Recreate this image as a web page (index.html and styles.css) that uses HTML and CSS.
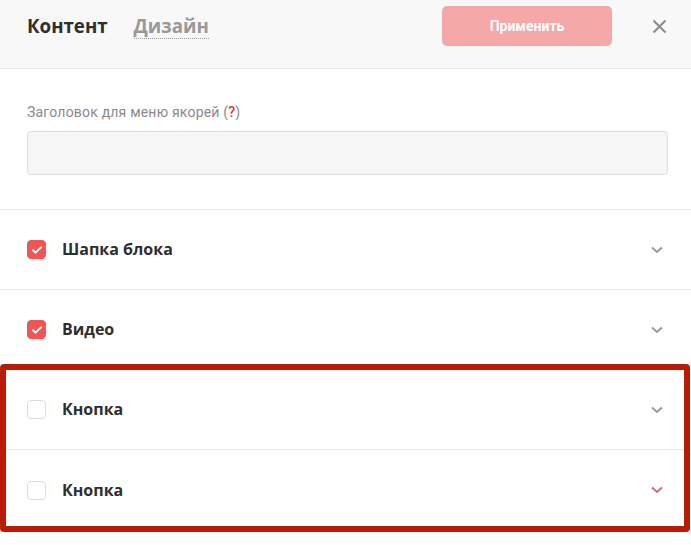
FILE: index.html
```html
<!DOCTYPE html>
<html lang="ru">
<head>
<meta charset="utf-8">
<link rel="stylesheet" href="styles.css">
</head>
<body>
<div class="panel">
  <header class="head">
    <div class="tabs">
      <span class="tab active">Контент</span>
      <span class="tab">Дизайн</span>
    </div>
    <button class="apply">Применить</button>
    <button class="close" aria-label="Закрыть">
      <svg width="15" height="15" viewBox="0 0 15 15"><path d="M1.5 1.5L13.5 13.5M13.5 1.5L1.5 13.5" stroke="#8a8a8a" stroke-width="2" fill="none"/></svg>
    </button>
  </header>
  <section class="field">
    <label class="label">Заголовок для меню якорей (<span class="q">?</span>)</label>
    <div class="input"></div>
  </section>
  <div class="row">
    <span class="cb on"><svg width="12" height="10" viewBox="0 0 12 10"><path d="M2 5.2L4.6 7.6L10 2.4" stroke="#fff" stroke-width="2" fill="none" stroke-linecap="round" stroke-linejoin="round"/></svg></span>
    <span class="name">Шапка блока</span>
    <svg class="chev" width="12" height="8" viewBox="0 0 12 8"><path d="M1 1.5L6 6L11 1.5" stroke="#999" stroke-width="2" fill="none"/></svg>
  </div>
  <div class="row">
    <span class="cb on"><svg width="12" height="10" viewBox="0 0 12 10"><path d="M2 5.2L4.6 7.6L10 2.4" stroke="#fff" stroke-width="2" fill="none" stroke-linecap="round" stroke-linejoin="round"/></svg></span>
    <span class="name">Видео</span>
    <svg class="chev" width="12" height="8" viewBox="0 0 12 8"><path d="M1 1.5L6 6L11 1.5" stroke="#999" stroke-width="2" fill="none"/></svg>
  </div>
  <div class="row">
    <span class="cb"></span>
    <span class="name">Кнопка</span>
    <svg class="chev" width="12" height="8" viewBox="0 0 12 8"><path d="M1 1.5L6 6L11 1.5" stroke="#999" stroke-width="2" fill="none"/></svg>
  </div>
  <div class="row last">
    <span class="cb"></span>
    <span class="name">Кнопка</span>
    <svg class="chev" width="12" height="8" viewBox="0 0 12 8"><path d="M1 1.5L6 6L11 1.5" stroke="#c47272" stroke-width="2" fill="none"/></svg>
  </div>
  <div class="highlight"></div>
</div>
</body>
</html>
```
FILE: styles.css
```css
* { box-sizing: border-box; }
html, body { margin: 0; padding: 0; background: #fff; }
body { font-family: "Open Sans", Roboto, Arial, sans-serif; color: #333; }
.panel { position: relative; width: 691px; height: 545px; overflow: hidden; }
.head {
  height: 69px;
  background: #f8f8f8;
  border-bottom: 1px solid #e6e6e6;
  display: flex;
  align-items: flex-start;
  padding: 0 24px 0 27px;
}
.tabs { display: flex; gap: 26px; flex: 1; margin-top: 13px; }
.tab { font-size: 18.7px; font-weight: 700; color: #999; line-height: 26px; }
.tab + .tab { border-bottom: 1px dotted #999; line-height: 25px; }
.tab.active { color: #2e2e2e; }
.apply {
  width: 170px; height: 40px;
  margin-top: 6px;
  border: 0; border-radius: 5px;
  background: #f4a8a8; color: #fff;
  font: 700 14px Roboto, sans-serif;
  margin-right: 40px;
}
.close { border: 0; background: none; padding: 0; width: 15px; height: 15px; margin-top: 19px; display: flex; }
.field { padding: 35px 23px 34px 27px; border-bottom: 1px solid #e8e8e8; }
.label { display: block; font: 14px/17px Roboto, sans-serif; letter-spacing: 0.2px; color: #8a8a8a; margin-bottom: 10px; }
.q { color: #d83a3a; font-weight: 500; }
.input { height: 44px; background: #f6f6f6; border: 1px solid #ddd; border-radius: 4px; }
.row {
  height: 80px;
  display: flex; align-items: center;
  padding: 0 28px 0 27px;
  border-bottom: 1px solid #e8e8e8;
}
.row.last { border-bottom: 0; }
.cb {
  width: 19px; height: 19px; border-radius: 4px;
  border: 1px solid #dcdcdc; background: #fff;
  display: flex; align-items: center; justify-content: center;
  margin-right: 16px;
}
.cb.on { background: #f05656; border-color: #f05656; }
.name { flex: 1; font-size: 16px; font-weight: 700; color: #2e2e2e; line-height: 20px; margin-top: -1px; }
.chev { display: block; }
.highlight {
  position: absolute; left: 0; top: 364px; width: 690px; height: 168px;
  border: 6px solid #b81c04; border-radius: 4px; pointer-events: none;
}
```
